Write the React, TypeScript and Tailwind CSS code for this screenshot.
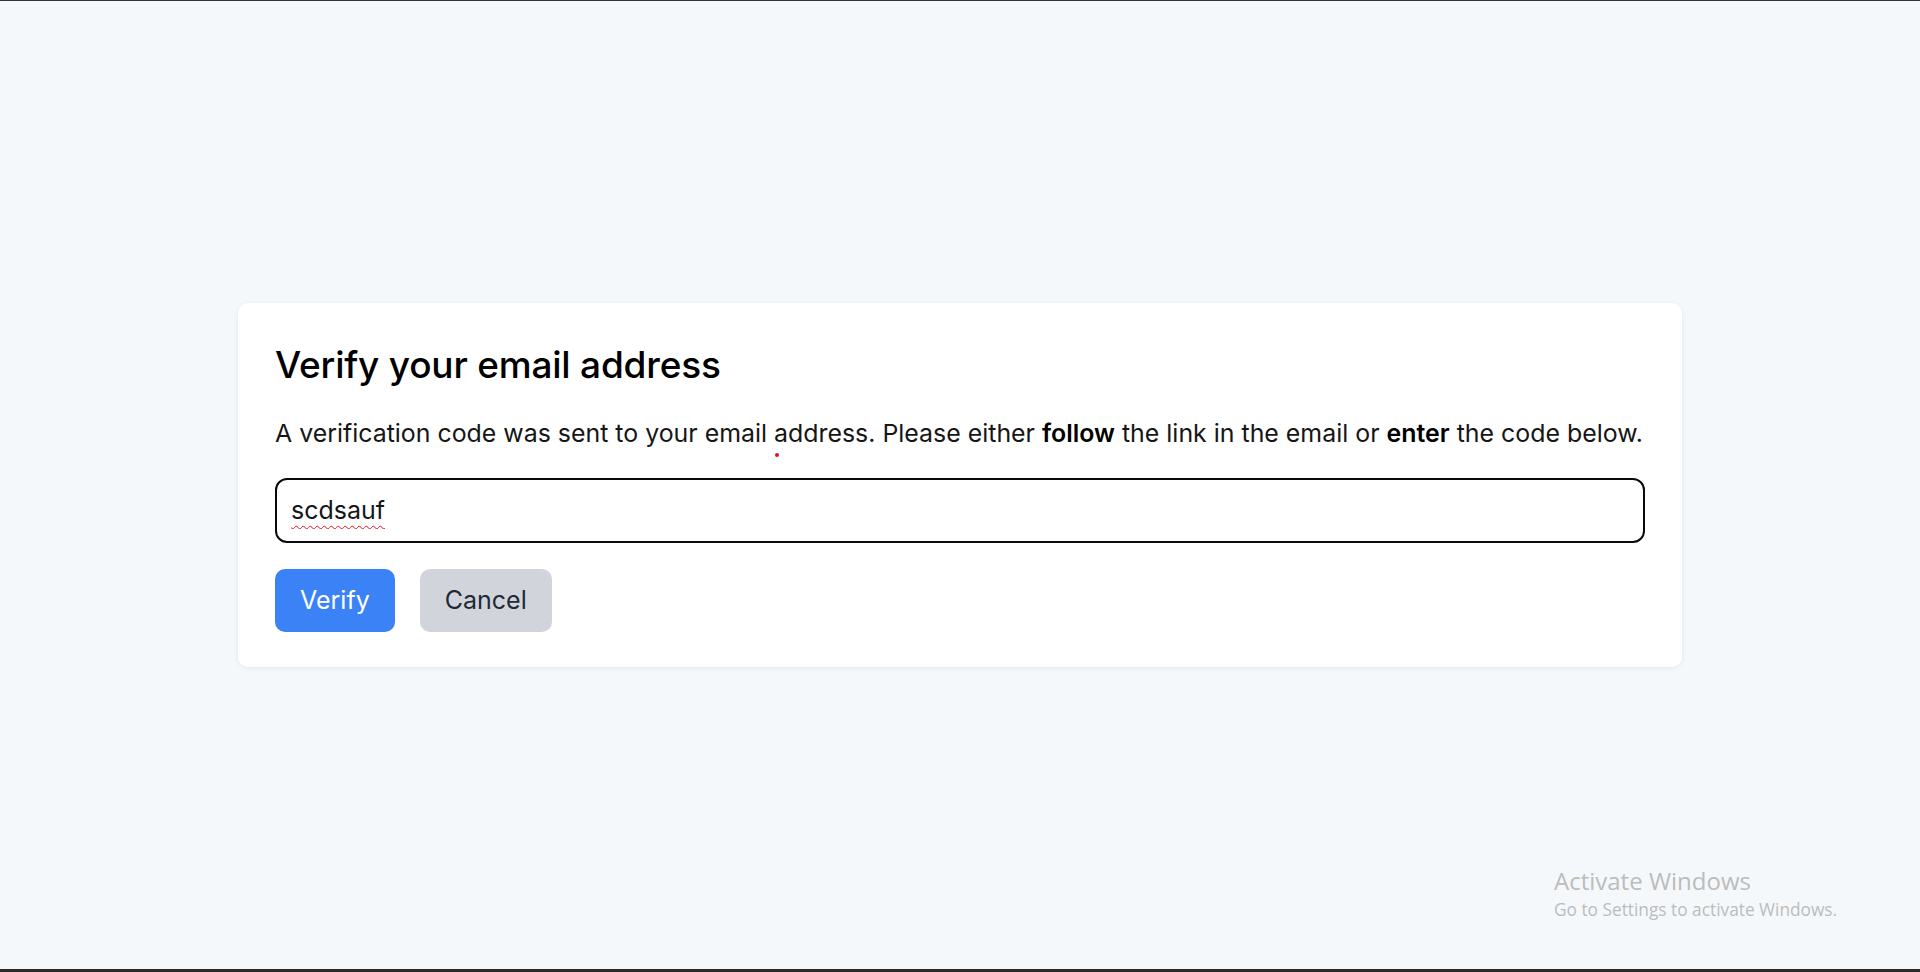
import React, { useState } from 'react';

export default function App() {
  const [code, setCode] = useState('scdsauf');

  return (
    <div
      className="relative flex h-[972px] flex-col bg-[#f5f8fb] text-black"
      style={{ fontFamily: 'Inter, "Noto Sans", sans-serif' }}
    >
      <div className="h-px bg-[#333]" />

      <div className="flex flex-1 items-center justify-center">
        {/* Verification card */}
        <div className="w-[1444px] rounded-[10px] bg-white px-[37px] pt-[39px] pb-[35px] shadow-[0_1px_5px_rgba(0,0,0,0.07)]">
          <h1 className="text-[37px] leading-[45px] font-medium tracking-[-0.2px]">
            Verify your email address
          </h1>

          <p className="relative mt-[29px] whitespace-nowrap text-[24.9px] leading-[35px] text-[#161616]">
            A verification code was sent to your email address. Please either{' '}
            <span className="font-semibold text-black">follow</span> the link in the email or{' '}
            <span className="font-semibold text-black">enter</span> the code below.
            <span className="absolute left-[500px] top-[37px] h-[4px] w-[4px] rounded-full bg-[#e81123]" />
          </p>

          <div className="mt-[27px] flex h-[65px] items-center rounded-[12px] border-[2.5px] border-[#0a0a0a] px-[14px]">
            <input
              value={code}
              onChange={(e) => setCode(e.target.value)}
              className="w-full bg-transparent text-[25px] text-[#161616] underline decoration-wavy decoration-[#e81123] decoration-1 underline-offset-[6px] outline-none"
            />
          </div>

          <div className="mt-[26px] flex gap-[25px]">
            <button className="h-[63px] rounded-[10px] bg-[#3b82f6] px-[25px] text-[25px] text-white">
              Verify
            </button>
            <button className="h-[63px] rounded-[10px] bg-[#d1d5db] px-[25px] text-[25px] text-[#1f2937]">
              Cancel
            </button>
          </div>
        </div>
      </div>

      {/* Windows activation watermark */}
      <div
        className="absolute left-[1554px] top-[865px] text-[#bcbcbc]"
        style={{ fontFamily: '"Open Sans", "Noto Sans", sans-serif' }}
      >
        <div className="text-[24px] leading-[31px]">Activate Windows</div>
        <div className="mt-[2px] text-[17.3px] leading-[23px]">Go to Settings to activate Windows.</div>
      </div>

      <div className="h-[3px] bg-[#2b2b2b]" />
    </div>
  );
}
